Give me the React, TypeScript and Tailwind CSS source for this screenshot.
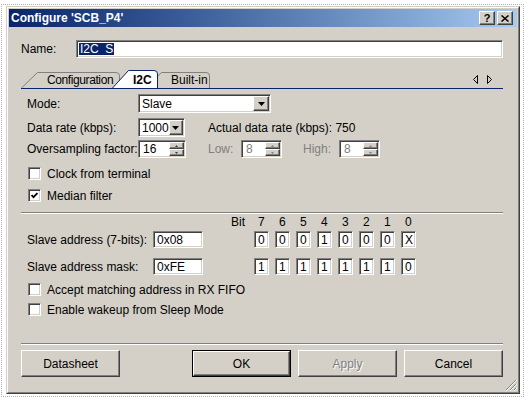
import React from 'react'

const sunken = "border border-t-[#808080] border-l-[#808080] border-r-white border-b-white shadow-[inset_1px_1px_0_#404040,inset_-1px_-1px_0_#d4d0c8]"
const raised = "border border-t-white border-l-white border-r-[#404040] border-b-[#404040] shadow-[inset_-1px_-1px_0_#808080] bg-[#d4d0c8]"

function DownArrow() {
    return <svg width="7" height="4" viewBox="0 0 7 4"><path d="M0 0h7L3.5 4z" fill="#000" /></svg>
}

function Combo({ value, className = "" }) {
    return (
        <div className={`${sunken} bg-white p-[1px] flex ${className}`}>
            <span className="flex-1 pl-[2px] flex items-center text-black">{value}</span>
            <span className={`${raised} w-[16px] flex items-center justify-center`}><DownArrow /></span>
        </div>
    )
}

function Spin({ value, disabled = false, className = "" }) {
    const c = disabled ? "#808080" : "#404040"
    return (
        <div className={`${sunken} bg-white p-[1px] flex ${className}`}>
            <span className={`flex-1 pl-[3px] flex items-center ${disabled ? 'text-[#808080]' : 'text-black'}`}>{value}</span>
            <span className="w-[15px] flex flex-col">
                <span className={`${raised} flex-1 flex items-center justify-center`}>
                    <svg width="3" height="2" viewBox="0 0 3 2"><path d="M1.5 0L3 2H0z" fill={c} /></svg>
                </span>
                <span className={`${raised} flex-1 flex items-center justify-center`}>
                    <svg width="3" height="2" viewBox="0 0 3 2"><path d="M0 0h3L1.5 2z" fill={c} /></svg>
                </span>
            </span>
        </div>
    )
}

function Check({ checked = false, label }) {
    return (
        <div className="flex items-center gap-[6px] h-[13px] pl-[1px]">
            <span className={`${sunken} bg-white w-[13px] h-[13px] flex items-center justify-center`}>
                {checked && (
                    <svg width="7" height="7" viewBox="0 0 7 7">
                        <path d="M0.5 3l2 2.2L6.5 1" stroke="#000" strokeWidth="1.8" fill="none" />
                    </svg>
                )}
            </span>
            <span>{label}</span>
        </div>
    )
}

function Tab({ label, width, selected = false, pad, className = "" }) {
    const t = selected ? 0.5 : 2.5
    const w = width
    const edge = `M0.5 18 L16.5 ${t} H${w - 4} Q${w - 0.5} ${t} ${w - 0.5} ${t + 3.5} V18`
    return (
        <div className={`relative h-[18px] flex items-center ${className}`}>
            <svg className="absolute inset-0" width={w} height="18" viewBox={`0 0 ${w} 18`}>
                <path d={edge + " Z"} fill={selected ? "#fff" : "#d4d0c8"} />
                <path d={edge} fill="none" stroke={selected ? "#0a246a" : "#808080"} />
            </svg>
            <span className={`relative pt-[2px] ${pad} ${selected ? 'font-bold' : ''}`}>{label}</span>
        </div>
    )
}

function Bit({ v }) {
    return <span className={`${sunken} bg-white w-[15px] h-[17px] pl-[3px] flex items-center`}>{v}</span>
}

function Button({ label, disabled = false, isDefault = false }) {
    const inner = (
        <div className={`${raised} h-full flex items-center justify-center ${disabled ? 'text-[#808080] [text-shadow:1px_1px_0_#fff]' : ''}`}>
            {label}
        </div>
    )
    if (isDefault) return <div className="border border-black w-[99px] h-[27px]">{inner}</div>
    return <div className="w-[99px] h-[27px]">{inner}</div>
}

export default function App() {
    const bits1 = ['0', '0', '0', '1', '0', '0', '0', 'X']
    const bits2 = ['1', '1', '1', '1', '1', '1', '1', '0']
    return (
        <div className="w-[524px] h-[399px] bg-white pt-[4px] pl-[1px] font-['Liberation_Sans',Arial,sans-serif] text-[12px] text-black leading-none">
            <div className="w-[523px] h-[393px] border border-dotted border-[#b0b0b0] pl-[4px] pt-[1px]">
                <div className="relative w-[514px] h-[388px] border border-t-[#d4d0c8] border-l-[#d4d0c8] border-r-[#404040] border-b-[#404040]">
                    <div className="h-full border border-t-white border-l-white border-r-[#808080] border-b-[#808080] bg-[#d4d0c8] p-[1px] flex flex-col">
                        {/* title bar */}
                        <div className="h-[18px] bg-linear-to-r from-[#0a246a] to-[#a6caf0] flex items-center justify-between pl-[2px] pr-[4px]">
                            <span className="text-white font-bold text-[12px]">Configure 'SCB_P4'</span>
                            <div className="flex gap-[2px]">
                                <span className={`${raised} w-[16px] h-[14px] flex items-center justify-center font-bold text-[11px]`}>?</span>
                                <span className={`${raised} w-[16px] h-[14px] flex items-center justify-center`}>
                                    <svg width="8" height="7" viewBox="0 0 8 7"><path d="M0.5 0.5l7 6M7.5 0.5l-7 6" stroke="#000" strokeWidth="1.5" /></svg>
                                </span>
                            </div>
                        </div>

                        <div className="pl-[12px] pr-[14px] flex flex-col">
                            {/* name */}
                            <div className="mt-[13px] h-[18px] flex items-center">
                                <span className="w-[55px]">Name:</span>
                                <div className={`${sunken} bg-white w-[427px] h-[18px] pl-[2px] flex items-center`}>
                                    <span className="bg-[#0a246a] text-white px-[1px] h-[12px] leading-[12px] inline-block">I2C_S</span>
                                </div>
                            </div>

                            {/* tabs */}
                            <div className="mt-[12px] h-[18px] flex">
                                <Tab label="Configuration" width={99} pad="pl-[26px] tracking-[-0.4px]" className="w-[99px]" />
                                <Tab label="I2C" width={46} selected pad="pl-[21px]" className="w-[46px] -ml-[8px] z-10" />
                                <Tab label="Built-in" width={65} pad="pl-[26px]" className="w-[65px] -ml-[13px]" />
                                <div className="ml-auto pr-[11px] flex items-center gap-[9px] pt-[1px]">
                                    <svg width="5" height="9" viewBox="0 0 5 9"><path d="M4.5 0.5v8L0.5 4.5z" fill="none" stroke="#000" /></svg>
                                    <svg width="5" height="9" viewBox="0 0 5 9"><path d="M0.5 0.5v8L4.5 4.5z" fill="none" stroke="#000" /></svg>
                                </div>
                            </div>
                            <div className="h-px bg-[#0a246a]" />

                            {/* general */}
                            <div className="pl-[6px]">
                                <div className="mt-[5px] h-[19px] flex items-center">
                                    <span className="w-[111px]">Mode:</span>
                                    <Combo value="Slave" className="w-[133px] h-[19px]" />
                                </div>
                                <div className="mt-[5px] h-[19px] flex items-center">
                                    <span className="w-[111px]">Data rate (kbps):</span>
                                    <Combo value="1000" className="w-[47px] h-[19px]" />
                                    <span className="ml-[23px]">Actual data rate (kbps): 750</span>
                                </div>
                                <div className="mt-[3px] h-[18px] flex items-center">
                                    <span className="w-[111px]">Oversampling factor:</span>
                                    <Spin value="16" className="w-[48px] h-[18px]" />
                                    <span className="ml-[22px] w-[33px] text-[#808080]">Low:</span>
                                    <Spin value="8" disabled className="w-[41px] h-[18px]" />
                                    <span className="ml-[21px] w-[36px] text-[#808080]">High:</span>
                                    <Spin value="8" disabled className="w-[41px] h-[18px]" />
                                </div>
                                <div className="mt-[9px]"><Check label="Clock from terminal" /></div>
                                <div className="mt-[9px]"><Check checked label="Median filter" /></div>
                            </div>

                            <div className="mt-[10px] h-[2px] border-t border-t-[#808080] border-b border-b-white" />

                            {/* addresses */}
                            <div className="pl-[6px]">
                                <div className="mt-px h-[13px] flex items-center">
                                    <span className="w-[218px] text-right">Bit</span>
                                    <div className="ml-[9px] flex gap-[6px]">
                                        {['7', '6', '5', '4', '3', '2', '1', '0'].map((d) => (
                                            <span key={d} className="w-[15px] pl-[4px]">{d}</span>
                                        ))}
                                    </div>
                                </div>
                                <div className="mt-[3px] h-[17px] flex items-center">
                                    <span className="w-[126px]">Slave address (7-bits):</span>
                                    <div className={`${sunken} bg-white w-[50px] h-[17px] pl-[3px] flex items-center`}>0x08</div>
                                    <div className="ml-[51px] flex gap-[6px]">
                                        {bits1.map((b, i) => <Bit key={i} v={b} />)}
                                    </div>
                                </div>
                                <div className="mt-[10px] h-[17px] flex items-center">
                                    <span className="w-[126px]">Slave address mask:</span>
                                    <div className={`${sunken} bg-white w-[50px] h-[17px] pl-[3px] flex items-center`}>0xFE</div>
                                    <div className="ml-[51px] flex gap-[6px]">
                                        {bits2.map((b, i) => <Bit key={i} v={b} />)}
                                    </div>
                                </div>
                                <div className="mt-[8px]"><Check label="Accept matching address in RX FIFO" /></div>
                                <div className="mt-[7px]"><Check label="Enable wakeup from Sleep Mode" /></div>
                            </div>

                            <div className="mt-[27px] h-[2px] border-t border-t-[#808080] border-b border-b-white" />

                            {/* buttons */}
                            <div className="mt-[5px] flex justify-between">
                                <Button label="Datasheet" />
                                <div className="flex gap-[7px]">
                                    <Button label="OK" isDefault />
                                    <Button label="Apply" disabled />
                                    <Button label="Cancel" />
                                </div>
                            </div>
                        </div>
                    </div>
                    <svg className="absolute right-[2px] bottom-[2px]" width="12" height="12" viewBox="0 0 12 12">
                        <path d="M11 1L1 11M11 5L5 11M11 9L9 11" stroke="#808080" />
                        <path d="M12 1L1 12M12 5L5 12M12 9L9 12" stroke="#fff" />
                    </svg>
                </div>
            </div>
        </div>
    )
}
